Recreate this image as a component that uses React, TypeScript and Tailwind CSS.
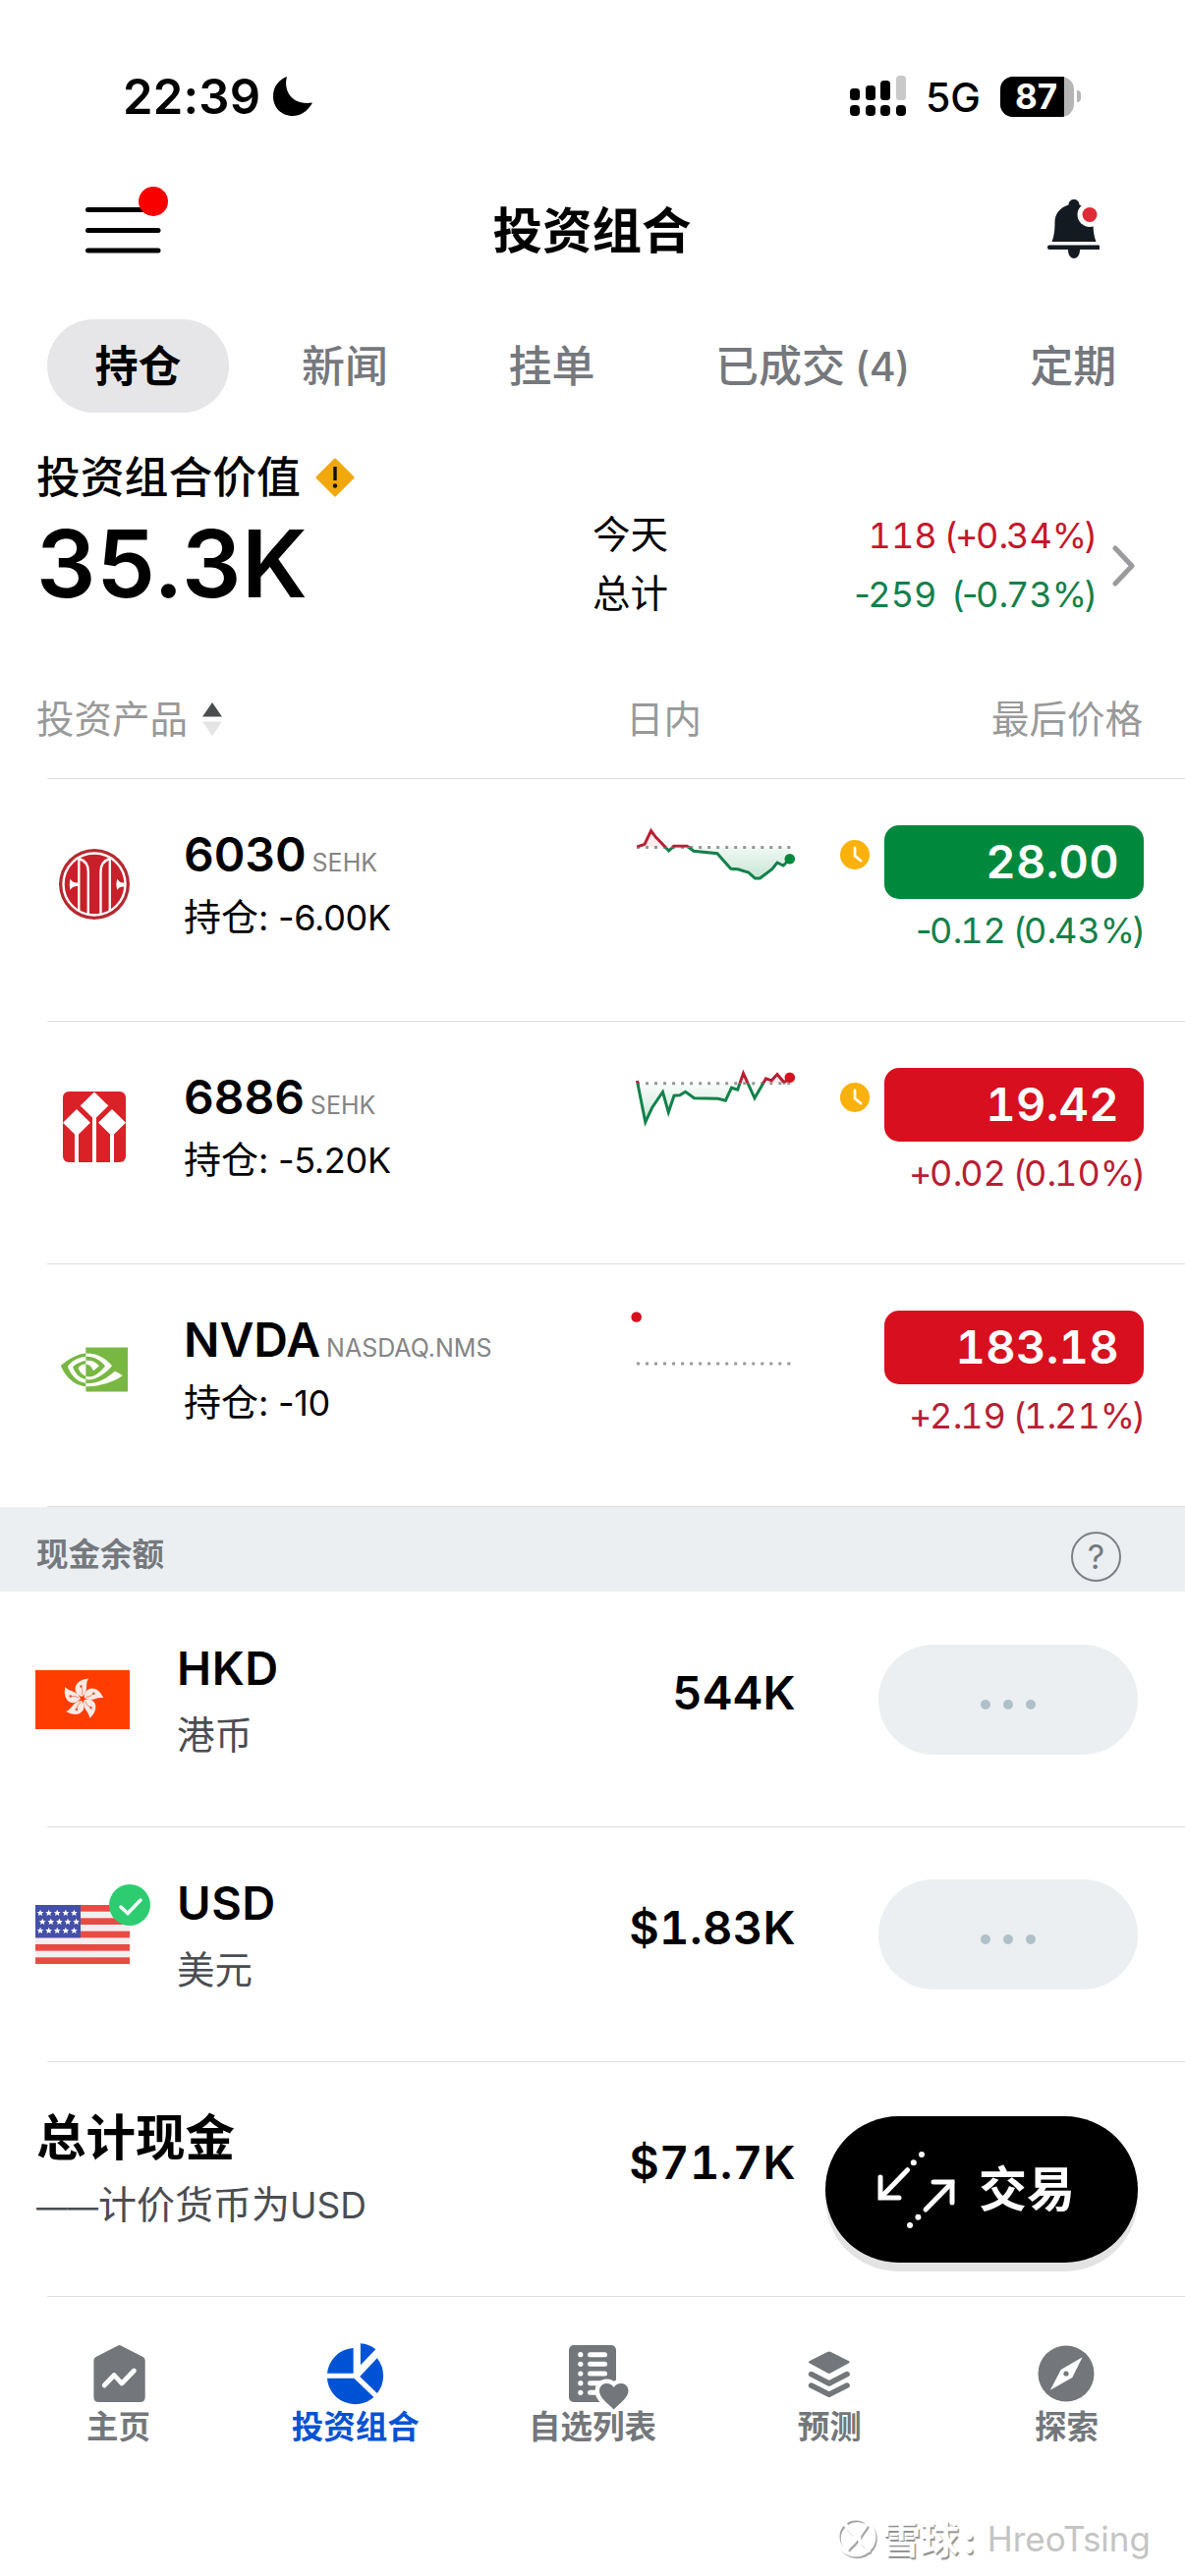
import type { ReactNode } from "react";
import { SiNvidia } from "react-icons/si";

const RED = "#d80f1e";
const GREEN = "#00883d";
const GREY = "#73777b";

type Point = [number, number];

const CiticLogo = () => (
  <svg width="72" height="72" viewBox="0 0 72 72">
    <circle cx="36" cy="36" r="36" fill="#b5292f" />
    <circle cx="36" cy="36" r="31.5" fill="#c8202a" stroke="#fff" strokeWidth="2.4" />
    <g fill="none" stroke="#fff" strokeWidth="2.4">
      <path d="M20.3 9.5V63" />
      <path d="M51.8 9.5V63" />
      <path d="M20.3 10C27 12 29.8 17 29.8 23V66" />
      <path d="M51.8 10C45.5 12 42.5 17 42.5 23V66" />
    </g>
    <path d="M11.5 30.5c2 4 5 4 9 4v3.5c-4 0-7 0-9 4-1-4-1-8 0-11.5z" fill="#fff" />
    <path d="M59.5 30.5c2 4 4 4 8 4v4c-4 0-6 0-8 3.5-1.5-4-1.5-8 0-11.5z" fill="#fff" />
  </svg>
);

const HuataiLogo = () => (
  <svg width="72" height="72" viewBox="0 0 72 72">
    <rect x="4" y="0" width="64" height="72" rx="6" fill="#da2128" />
    <g fill="#fff">
      <path d="M36 .5l14.3 14-14.3 14-14.3-14z" />
      <path d="M18 18l14 13.7-14 13.8L4 31.7z" />
      <path d="M54 18l14 13.7-14 13.8-14-13.8z" />
      <rect x="34" y="26" width="4" height="46" />
      <rect x="16" y="42" width="4" height="30" />
      <rect x="52" y="42" width="4" height="30" />
    </g>
  </svg>
);

const HongKongFlag = () => (
  <svg width="96" height="60" viewBox="0 0 96 60">
    <rect width="96" height="60" fill="#ff3d00" />
    {[0, 72, 144, 216, 288].map((angle) => (
      <g key={angle} transform={`translate(48 29) rotate(${angle})`}>
        <path d="M-.5-2C-11-5-10-19 6-20.5 2-15 7-8-.5-2z" fill="#fbe9e4" />
        <path d="M-.5-4Q1-8-1.5-12" fill="none" stroke="#e8775a" strokeWidth="0.8" />
        <circle cx="-1.5" cy="-12.5" r="1.3" fill="#e0553a" />
      </g>
    ))}
  </svg>
);

const STAR_ROWS: Point[] = [
  [5, 8],
  [7.2, 17],
  [5, 26],
];

const UsFlag = () => (
  <svg width="96" height="60" viewBox="0 0 96 60">
    <rect width="96" height="60" fill="#f3eef0" />
    {[0, 1, 2, 3, 4].map((n) => (
      <rect key={n} y={n * 13.33} width="96" height="6.67" fill="#e94b44" />
    ))}
    <rect width="46" height="33.3" fill="#4450a8" />
    {STAR_ROWS.map(([x, y]) =>
      [0, 1, 2, 3, 4].map((n) => (
        <path
          key={`${y}-${n}`}
          transform={`translate(${x + n * 8.6} ${y})`}
          d="M0-3.3L1-1.1 3.3-.9 1.6.7 2.1 3 0 1.8-2.1 3-1.6.7-3.3-.9-1-1.1z"
          fill="#fff"
        />
      )),
    )}
  </svg>
);

// Digits keep a fixed pitch, the signs and brackets between them stay tight
const Figures = ({ text }: { text: string }) => (
  <>
    {text.split(/(\d+)/).map((part, index) => (
      <span key={index} className={index % 2 ? "tabular-nums" : "tracking-[-2.6px]"}>
        {part}
      </span>
    ))}
  </>
);

interface SparklineProps {
  id: string;
  base: number;
  points: Point[];
  up: boolean;
}

// Red above the previous close, green below it
const Sparkline = ({ id, base, points, up }: SparklineProps) => {
  const line = points.map((p) => p.join(",")).join(" ");
  const last = points[points.length - 1];
  const area = `${points[0][0]},${base} ${line} ${last[0]},${base}`;

  return (
    <svg width="180" height="90" viewBox="0 0 180 90">
      <defs>
        <clipPath id={`${id}-above`}>
          <rect width="180" height={base} />
        </clipPath>
        <clipPath id={`${id}-below`}>
          <rect y={base} width="180" height={90 - base} />
        </clipPath>
        <linearGradient id={`${id}-fill`} x1="0" y1="0" x2="0" y2="1">
          <stop offset="0.2" stopColor={GREEN} stopOpacity="0.02" />
          <stop offset="1" stopColor={GREEN} stopOpacity="0.22" />
        </linearGradient>
      </defs>
      <line
        x1="8"
        x2="165"
        y1={base}
        y2={base}
        stroke="#999"
        strokeWidth="3"
        strokeDasharray="3 6.02"
      />
      {points.length > 1 && (
        <>
          <polygon points={area} fill={`url(#${id}-fill)`} clipPath={`url(#${id}-below)`} />
          <polygon points={area} fill={RED} fillOpacity="0.08" clipPath={`url(#${id}-above)`} />
          <polyline
            points={line}
            fill="none"
            stroke="#b91e33"
            strokeWidth="3"
            clipPath={`url(#${id}-above)`}
          />
          <polyline
            points={line}
            fill="none"
            stroke="#12804a"
            strokeWidth="3"
            clipPath={`url(#${id}-below)`}
          />
        </>
      )}
      <circle cx={last[0]} cy={last[1]} r="5.3" fill={up ? RED : GREEN} />
    </svg>
  );
};

const ClockBadge = () => (
  <svg width="30" height="30" viewBox="0 0 30 30">
    <circle cx="15" cy="15" r="15" fill="#fab10b" />
    <path
      d="M15 8v8l6 5"
      fill="none"
      stroke="#fff"
      strokeWidth="2.8"
      strokeLinecap="round"
    />
  </svg>
);

const tabs = [
  { label: "持仓" },
  { label: "新闻" },
  { label: "挂单" },
  { label: "已成交", count: 4 },
  { label: "定期" },
];

const holdings = [
  {
    symbol: "6030",
    exchange: "SEHK",
    position: "-6.00K",
    price: "28.00",
    change: "-0.12 (0.43%)",
    up: false,
    delayed: true,
    logo: <CiticLogo />,
    base: 32.5,
    points: [
      [8.4, 32], [16, 29.3], [22.6, 15.7], [27.6, 22.3], [33.4, 28.3],
      [40.7, 36], [45.7, 31.3], [59.2, 31.3], [66, 36.3], [90, 38.7],
      [98.4, 48.3], [103.8, 54.3], [111, 54.7], [121.8, 58], [128.4, 64],
      [133.4, 64], [145.7, 54.7], [151, 48], [157.2, 51], [163.8, 44.3],
    ] as Point[],
  },
  {
    symbol: "6886",
    exchange: "SEHK",
    position: "-5.20K",
    price: "19.42",
    change: "+0.02 (0.10%)",
    up: true,
    delayed: true,
    logo: <HuataiLogo />,
    base: 25.8,
    points: [
      [8.4, 23], [16.8, 65.2], [23.8, 50.2], [34.5, 34.5], [40.3, 55.2],
      [46, 38.2], [51.8, 37.8], [57.6, 34.2], [66.5, 40.8], [90.7, 41.2],
      [98.4, 43.2], [104.5, 30.2], [110.7, 32.2], [116.5, 15.5], [128, 40.8],
      [139.5, 20.8], [145.3, 22.8], [151, 16.5], [158, 24.8], [163.8, 19.8],
    ] as Point[],
  },
  {
    symbol: "NVDA",
    exchange: "NASDAQ.NMS",
    position: "-10",
    price: "183.18",
    change: "+2.19 (1.21%)",
    up: true,
    delayed: false,
    logo: <SiNvidia size={68} color="#78b842" className="ml-0.5" />,
    base: 64,
    points: [[7.7, 16.5]] as Point[],
  },
];

const balances = [
  { code: "HKD", name: "港币", amount: "544K", flag: <HongKongFlag />, isBase: false },
  { code: "USD", name: "美元", amount: "$1.83K", flag: <UsFlag />, isBase: true },
];

const StatusBar = () => (
  <div className="flex h-[196px] items-center justify-between pl-[125px] pr-[106px]">
    <div className="flex items-center gap-3">
      <span className="text-[49px] font-semibold leading-none tracking-[0.2px]">22:39</span>
      <svg width="42" height="42" viewBox="0 0 42 42">
        <path d="M15 1C11 15 20 31 41 27.5 36 37 28 41 21 41 9 41 1 32 1 21 1 11 7 4 15 1z" />
      </svg>
    </div>
    <div className="flex items-center">
      <svg width="60" height="44" viewBox="0 0 60 44">
        {[0, 16, 31, 47].map((x) => (
          <rect key={x} x={x} y="31" width="10" height="11" rx="4" />
        ))}
        <rect x="0" y="14" width="10" height="12" rx="3.5" />
        <rect x="16" y="11" width="10" height="15" rx="3.5" />
        <rect x="31" y="6" width="10" height="20" rx="3.5" />
        <rect x="47" y="1" width="10" height="25" rx="3.5" fill="#c9c9c9" />
      </svg>
      <span className="ml-[17px] mt-0.5 text-[41px] font-medium leading-none">5G</span>
      <div className="ml-[20px] flex h-[41px] w-[75px] items-center overflow-hidden rounded-[13px] bg-[#b5b5b5]">
        <div className="flex h-full w-[65px] items-center justify-center bg-black pl-2 text-[35px] font-bold leading-none text-white">
          87
        </div>
      </div>
      <div className="ml-[3px] h-[12px] w-1 rounded-r-full bg-[#b5b5b5]" />
    </div>
  </div>
);

const TitleBar = () => (
  <div className="flex h-[78px] items-center justify-between pl-[86px] pr-[87px]">
    <svg width="88" height="78" viewBox="0 0 88 78" className="overflow-visible">
      <g stroke="#000" strokeWidth="5" strokeLinecap="round">
        <path d="M3.5 17.5H75" />
        <path d="M3.5 38.5H75" />
        <path d="M3.5 59H75" />
      </g>
      <circle cx="70" cy="9" r="15" fill="#f80000" />
    </svg>
    <h1 className="text-[50.5px] font-bold leading-none">投资组合</h1>
    <svg width="58" height="70" viewBox="0 0 58 70" className="-mt-1 ml-[30px]">
      <g fill="#141a22">
        <path d="M26.5 10.5c0-7.5 11-7.5 11 0 9 3 14 9 14 18 0 9 1 14 3 19.5h-45c2-5.5 3-10.5 3-19.5 0-9 5-15 14-18z" />
        <rect x="5" y="51.5" width="54" height="4.5" rx="2" />
        <path d="M26 56h12c0 12-12 12-12 0z" />
      </g>
      <circle cx="48" cy="20.5" r="12.5" fill="#fff" />
      <circle cx="48" cy="20.5" r="7.5" fill="#e02a38" />
    </svg>
  </div>
);

const Tabs = () => (
  <div className="mt-[51px] flex gap-[25.5px] pl-12">
    {tabs.map((tab, index) => (
      <div
        key={tab.label}
        className={`flex h-[95px] items-center whitespace-nowrap rounded-full px-[48.5px] text-[44px] leading-none ${
          index === 0 ? "bg-[#e6e6e9] font-bold text-black" : "font-medium text-[#75787d]"
        }`}
      >
        {tab.label}
        {tab.count && (
          <span className="ml-[10px] mt-0.5 text-[41px] tracking-[-0.5px]">({tab.count})</span>
        )}
      </div>
    ))}
  </div>
);

const Summary = () => (
  <div className="flex h-[252px] pl-[37px]">
    <div className="w-[566px] pt-9">
      <div className="flex h-[60px] items-center gap-[15px]">
        <span className="text-[44.8px] font-medium leading-none">投资组合价值</span>
        <svg width="40" height="40" viewBox="0 0 40 40">
          <path
            d="M20 2L38 20 20 38 2 20z"
            fill="#f0a80c"
            stroke="#f0a80c"
            strokeWidth="3"
            strokeLinejoin="round"
          />
          <rect x="18.3" y="9" width="3.4" height="14" fill="#111" />
          <circle cx="20" cy="28.5" r="2.2" fill="#111" />
        </svg>
      </div>
      <div className="mt-2 text-[95px] font-semibold leading-[100px] tracking-[0.7px]">35.3K</div>
    </div>
    <div className="w-[150px] pt-[94px] text-[38.5px] leading-[60px]">
      <div>今天</div>
      <div>总计</div>
    </div>
    <div className="w-[361px] whitespace-pre pt-[95px] text-right text-[36px] leading-[60px]">
      <div className="text-[#c5162a]">
        <Figures text="118 (+0.34%)" />
      </div>
      <div className="text-[#12804a]">
        <Figures text="-259  (-0.73%)" />
      </div>
    </div>
    <svg width="24" height="42" viewBox="0 0 24 42" className="ml-[18px] mt-[135px]">
      <path
        d="M3 3l17 18L3 39"
        fill="none"
        stroke="#9b9b9f"
        strokeWidth="5"
        strokeLinecap="round"
        strokeLinejoin="round"
      />
    </svg>
  </div>
);

const ColumnHeader = () => (
  <div className="flex h-[120px] items-center pl-[37px] pr-[43px] text-[38.5px] leading-none text-[#999]">
    <span>投资产品</span>
    <svg width="20" height="34" viewBox="0 0 20 34" className="ml-[15px]">
      <path d="M10 0l10 14.5H0z" fill="#4a4d50" />
      <path d="M10 34L0 19.5h20z" fill="#e4e4e4" />
    </svg>
    <span className="ml-[411px]">日内</span>
    <span className="ml-auto">最后价格</span>
  </div>
);

const Divider = () => <div className="ml-12 h-px bg-[#dedede]" />;

const HoldingRow = ({ item }: { item: (typeof holdings)[number] }) => (
  <div className="flex h-[246px] pl-[60px]">
    <div className="mt-[71px] flex h-[72px] w-[127px] items-center">{item.logo}</div>
    <div className="w-[453px] pt-[47px]">
      <div className="flex items-baseline gap-[6px] leading-[60px]">
        <span className="text-[48px] font-semibold">{item.symbol}</span>
        <span className="text-[25px] text-[#858585]">{item.exchange}</span>
      </div>
      <div className="-mt-[5px] text-[38px] leading-[60px]">
        持仓<span className="text-[36px] tracking-[-0.3px]">: {item.position}</span>
      </div>
    </div>
    <div className="w-[215px] pt-[37px]">
      <Sparkline id={`spark-${item.symbol}`} base={item.base} points={item.points} up={item.up} />
    </div>
    <div className="w-[45px] pt-[62px]">{item.delayed && <ClockBadge />}</div>
    <div className="w-[264px] pt-[47px]">
      <div
        className={`flex h-[75px] items-center justify-end rounded-[15px] pb-[3px] pr-[25px] text-[47px] font-semibold leading-none tracking-[0.3px] tabular-nums text-white ${
          item.up ? "bg-[#d80f1e]" : "bg-[#00883d]"
        }`}
      >
        {item.price}
      </div>
      <div
        className={`mr-px mt-0.5 whitespace-nowrap text-right text-[36px] leading-[60px] ${
          item.up ? "text-[#b91e33]" : "text-[#12804a]"
        }`}
      >
        <Figures text={item.change} />
      </div>
    </div>
  </div>
);

const CashRow = ({ item }: { item: (typeof balances)[number] }) => (
  <div className="flex h-[238px] pl-9">
    <div className="relative mt-[79px] h-[60px] w-[144px]">
      {item.flag}
      {item.isBase && (
        <svg width="42" height="42" viewBox="0 0 42 42" className="absolute -top-[21px] left-[75px]">
          <circle cx="21" cy="21" r="21" fill="#2ecc71" />
          <path
            d="M12 23l7 6.5L32 16"
            fill="none"
            stroke="#fff"
            strokeWidth="3.5"
            strokeLinecap="round"
          />
        </svg>
      )}
    </div>
    <div className="w-[301px] pt-[47px]">
      <div className="text-[47px] font-semibold leading-[60px] tracking-[0.6px]">{item.code}</div>
      <div className="mt-2 text-[38.5px] leading-[60px] text-[#4a4d52]">{item.name}</div>
    </div>
    <div className="w-[329px] pt-[72px] text-right text-[47px] font-semibold leading-[60px] tracking-[0.4px] tabular-nums">
      {item.amount}
    </div>
    <div className="ml-[84px] mt-[53px] flex h-[112px] w-[264px] items-center justify-center gap-[13px] rounded-full bg-[#ebeff2] pt-[10px]">
      {[0, 1, 2].map((dot) => (
        <span key={dot} className="size-[10px] rounded-full bg-[#b0c0c9]" />
      ))}
    </div>
  </div>
);

const TradeButton = () => (
  <button className="ml-[30px] mt-[55px] flex h-[149px] w-[318px] items-center rounded-[75px] bg-black pl-[52px] text-white shadow-[0_9px_0_#e3e3e3]">
    <svg width="82" height="80" viewBox="0 0 82 80" fill="#fff">
      <g fill="none" stroke="#fff" strokeWidth="5" strokeLinecap="round">
        <path d="M31.6 19.7L4.7 47.5" />
        <path d="M4 27v21h19" />
        <path d="M50 60L77 32.5" />
        <path d="M58 32h19v21" />
      </g>
      <circle cx="37.8" cy="12.3" r="3" />
      <circle cx="46" cy="4" r="3" />
      <circle cx="42.4" cy="67.7" r="3" />
      <circle cx="34" cy="76" r="3" />
    </svg>
    <span className="ml-[22px] text-[49px] font-bold leading-none">交易</span>
  </button>
);

const TotalCash = () => (
  <div className="flex h-[238px] pl-[37px]">
    <div className="w-[444px] pt-[47px]">
      <div className="text-[50.5px] font-bold leading-[60px]">总计现金</div>
      <div className="mt-[8px] text-[39px] leading-[60px] text-[#4a4d52]">
        <span className="text-[31.5px]">——</span>计价货币为<span className="text-[37px]">USD</span>
      </div>
    </div>
    <div className="w-[329px] pt-[72px] text-right text-[47px] font-semibold leading-[60px] tracking-[0.4px] tabular-nums">
      $71.7K
    </div>
    <TradeButton />
  </div>
);

const NavIcon = ({ children }: { children: ReactNode }) => (
  <svg width="62" height="62" viewBox="0 0 62 62" className="overflow-visible" fill="currentColor">
    {children}
  </svg>
);

const navItems = [
  {
    label: "主页",
    active: false,
    icon: (
      <NavIcon>
        <path d="M29.5 2.7q2-1.2 4 0L55.5 14q2.2 1.2 2.2 3.5V55q0 5-5 5H10.4q-5 0-5-5V17.5q0-2.3 2.2-3.5z" />
        <path
          d="M16.2 43l10-10.5 7.7 8.5 12.5-13"
          fill="none"
          stroke="#fff"
          strokeWidth="4.8"
          strokeLinecap="round"
          strokeLinejoin="round"
        />
      </NavIcon>
    ),
  },
  {
    label: "投资组合",
    active: true,
    icon: (
      <NavIcon>
        <path d="M28.6 30.7H2A28.5 28.5 0 0 1 28.6 5z" />
        <path d="M35.9 22.3V.3A29 29 0 0 1 51.3 6.2z" />
        <path d="M35.2 34L52.8 15.3A28.5 28.5 0 0 1 52.8 51z" />
        <path d="M2 35.7h27.3L49.4 55A28.5 28.5 0 0 1 2 35.7z" />
      </NavIcon>
    ),
  },
  {
    label: "自选列表",
    active: false,
    icon: (
      <NavIcon>
        <rect x="7" y="2" width="48" height="58" rx="5" />
        {[11.7, 21.3, 31, 40.7, 50.3].map((y) => (
          <g key={y} fill="#fff">
            <circle cx="18.8" cy={y} r="2.6" />
            <rect x="26" y={y - 2.5} width="20" height="5" rx="2.5" />
          </g>
        ))}
        <path
          d="M52.7 67.5C45 60 38 55 38 48.5 38 40 49 38.5 52.7 45 56.5 38.5 67.5 40 67.5 48.5 67.5 55 60 60 52.7 67.5z"
          stroke="#fff"
          strokeWidth="9"
          paintOrder="stroke"
        />
      </NavIcon>
    ),
  },
  {
    label: "预测",
    active: false,
    icon: (
      <NavIcon>
        <path d="M29 9q1.8-1 3.6 0L51 18.3q1.5 1 0 2L32.6 30.2q-1.8 1-3.6 0L10.6 20.3q-1.5-1 0-2z" />
        <path
          d="M12.5 31.5l18.3 9.5L49.1 31.5M12.5 43l18.3 9.3L49.1 43"
          fill="none"
          stroke="currentColor"
          strokeWidth="5.5"
          strokeLinecap="round"
          strokeLinejoin="round"
        />
      </NavIcon>
    ),
  },
  {
    label: "探索",
    active: false,
    icon: (
      <NavIcon>
        <circle cx="31" cy="31" r="28.5" />
        <path d="M47.6 14.3L37.3 35 14.9 47.7 25.7 27z" fill="#fff" />
        <circle cx="31" cy="31" r="2.6" fill={GREY} />
      </NavIcon>
    ),
  },
];

const BottomNav = () => (
  <nav className="flex pt-[47px]">
    {navItems.map((item) => (
      <div
        key={item.label}
        className={`flex flex-1 flex-col items-center gap-1 ${
          item.active ? "text-[#0052d4]" : "text-[#73777b]"
        }`}
      >
        {item.icon}
        <span className="text-[32.5px] font-bold leading-[40px]">{item.label}</span>
      </div>
    ))}
  </nav>
);

const Watermark = () => (
  <div className="mt-[73px] flex h-10 items-center justify-end pr-[35px] leading-none">
    <svg width="44" height="46" viewBox="0 0 44 46" fill="none" strokeLinecap="round">
      <g stroke="#a4a4a4" strokeWidth="3.5" transform="translate(1.5 2)">
        <circle cx="21" cy="21" r="18.5" />
        <path d="M10 8c4 8 11 9 11 14s-7 7-9 12M32 8c-3 7-8 9-8 14s8 7 10 13" />
      </g>
      <g stroke="#fff" strokeWidth="4">
        <circle cx="21" cy="21" r="18.5" />
        <path d="M10 8c4 8 11 9 11 14s-7 7-9 12M32 8c-3 7-8 9-8 14s8 7 10 13" />
      </g>
    </svg>
    <span className="ml-1 w-[107px] whitespace-nowrap text-[39px] font-bold text-white [text-shadow:1.5px_2px_1px_#8f8f8f]">
      雪球<span className="ml-1">:</span>
    </span>
    <span className="text-[35px] text-[#c4c4c4]">HreoTsing</span>
  </div>
);

const App = () => {
  return (
    <div className="h-[2622px] w-[1206px] overflow-hidden bg-white font-['Inter','Noto_Sans_CJK_SC',sans-serif] text-black">
      <StatusBar />
      <TitleBar />
      <Tabs />
      <Summary />
      <ColumnHeader />
      {holdings.map((item) => (
        <div key={item.symbol}>
          <Divider />
          <HoldingRow item={item} />
        </div>
      ))}
      <Divider />

      {/* Cash balances */}
      <div className="mb-px flex h-[86px] items-center justify-between bg-[#ebeff2] pl-[37px] pr-[65px]">
        <span className="mt-[13px] text-[32.5px] font-bold leading-none text-[#75797d]">现金余额</span>
        <div className="mt-[15px] flex size-[51px] items-center justify-center rounded-full border-[2.5px] border-[#7c8084] text-[34px] leading-none text-[#75797d]">
          ?
        </div>
      </div>
      <CashRow item={balances[0]} />
      <Divider />
      <CashRow item={balances[1]} />
      <Divider />
      <TotalCash />
      <Divider />
      <BottomNav />
      <Watermark />
    </div>
  );
};

export default App;
